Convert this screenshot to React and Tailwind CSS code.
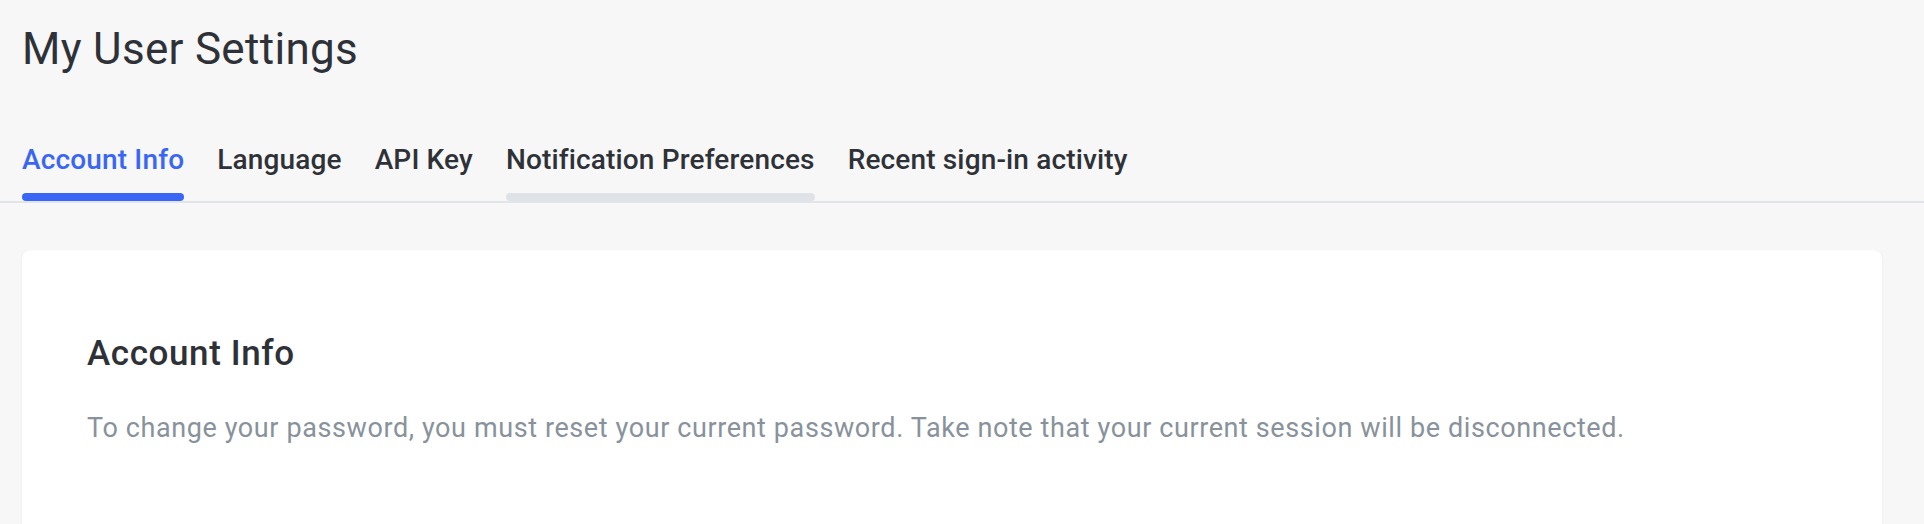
export default function App() {
  const tabs = [
    { label: "Account Info", active: true },
    { label: "Language" },
    { label: "API Key" },
    { label: "Notification Preferences", hover: true },
    { label: "Recent sign-in activity" },
  ];
  return (
    <div
      className="min-h-[524px] w-full bg-[#f7f7f7] text-[#2e3238]"
      style={{ fontFamily: "Roboto, 'Noto Sans', sans-serif" }}
    >
      <div className="px-[22px] pt-[19px]">
        <h1 className="text-[44px] leading-[60px] font-normal tracking-[0.3px]">My User Settings</h1>
      </div>
      <div className="mt-[63px] flex gap-[33px] border-b-2 border-[#e1e4e8] px-[22px]">
        {tabs.map((t) => (
          <div key={t.label} className="flex flex-col">
            <span
              className={
                "text-[28px] leading-[36px] font-medium tracking-[0.15px] whitespace-nowrap " +
                (t.active ? "text-[#3a66f6]" : "text-[#2e3238]")
              }
            >
              {t.label}
            </span>
            <div
              className={
                "mt-[15px] h-[8px] rounded-full " +
                (t.active ? "bg-[#3a66f6]" : t.hover ? "bg-[#dfe2e6]" : "bg-transparent")
              }
            />
          </div>
        ))}
      </div>
      <div className="pl-[22px] pr-[42px] pt-[47px]">
        <div className="h-[300px] rounded-[9px] bg-white px-[65px] pt-[82px] shadow-[0_1px_3px_rgba(0,0,0,0.06)]">
          <h2 className="text-[35px] leading-[44px] font-medium tracking-[0.6px] text-[#2e3238]">Account Info</h2>
          <p className="mt-[34px] text-[27px] leading-[36px] tracking-[0.6px] text-[#88929c]">
            To change your password, you must reset your current password. Take note that your current session will be disconnected.
          </p>
        </div>
      </div>
    </div>
  );
}
